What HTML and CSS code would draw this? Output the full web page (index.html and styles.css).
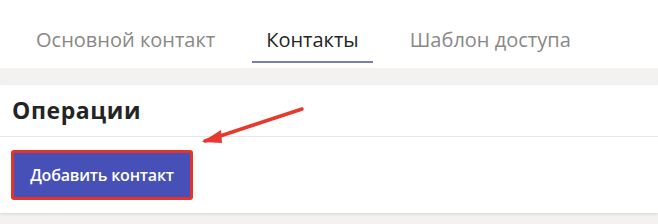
FILE: index.html
```html
<!DOCTYPE html>
<html lang="ru">
<head>
<meta charset="UTF-8">
<title>Контакты</title>
<link rel="stylesheet" href="styles.css">
</head>
<body>
<div class="tabs">
    <div class="tab">Основной контакт</div>
    <div class="tab active">Контакты</div>
    <div class="tab">Шаблон доступа</div>
</div>
<div class="content">
    <div class="card">
        <div class="card-title">Операции</div>
        <div class="card-body">
            <div class="highlight">
                <button class="add-btn">Добавить контакт</button>
            </div>
        </div>
    </div>
</div>
<svg class="arrow" width="120" height="50" viewBox="0 0 120 50">
    <line x1="103" y1="4" x2="6" y2="36" stroke="#e8392e" stroke-width="3.5" stroke-linecap="round"/>
    <path d="M3 37 L22 25 L23 38 Z" fill="#e8392e"/>
</svg>
</body>
</html>
```

FILE: styles.css
```css
body {
    margin: 0;
    background-color: #fff;
    font-family: "Open Sans", "Noto Sans", Arial, sans-serif;
    position: relative;
    width: 658px;
    height: 224px;
    overflow: hidden;
}

.tabs {
    display: flex;
    gap: 23px;
    padding: 23px 0 0 22px;
    box-sizing: border-box;
    height: 68px;
}

.tab {
    padding: 0 14px;
    font-size: 20px;
    color: #8a8886;
    height: 40px;
    line-height: 34px;
    box-sizing: border-box;
}

.tab.active {
    color: #252424;
    border-bottom: 2px solid #7b7fae;
}

.content {
    background: #f3f2f1;
    padding-top: 17px;
    height: 156px;
    box-sizing: border-box;
}

.card {
    background: #fff;
    height: 128px;
    box-shadow: 0 1px 3px rgba(0, 0, 0, 0.12);
}

.card-title {
    height: 51px;
    line-height: 51px;
    padding-left: 12px;
    font-size: 23px;
    font-weight: 700;
    color: #252424;
    border-bottom: 1px solid #e6e6e6;
    letter-spacing: 0.6px;
}

.card-body {
    padding: 13px 0 0 11px;
}

.highlight {
    display: inline-block;
    border: 3px solid #e3342a;
    border-radius: 3px;
}

.add-btn {
    display: block;
    width: 176px;
    height: 44px;
    border: none;
    background: #4650b6;
    color: #fff;
    font-family: "Open Sans", "Noto Sans", Arial, sans-serif;
    font-size: 16px;
    font-weight: 600;
    padding: 0;
    letter-spacing: -0.2px;
}

.arrow {
    position: absolute;
    left: 199px;
    top: 105px;
}
```
